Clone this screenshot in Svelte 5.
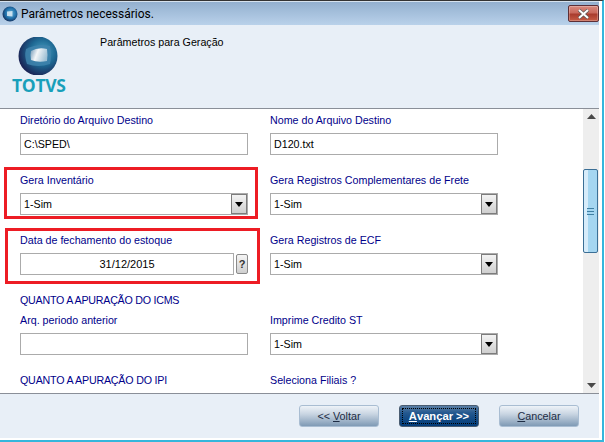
<script>
  const rows = [
    { left: { label: 'Diretório do Arquivo Destino', value: 'C:\\SPED\\', kind: 'input' }, right: { label: 'Nome do Arquivo Destino', value: 'D120.txt', kind: 'input' } },
    { left: { label: 'Gera Inventário', value: '1-Sim', kind: 'select' }, right: { label: 'Gera Registros Complementares de Frete', value: '1-Sim', kind: 'select' } },
    { left: { label: 'Data de fechamento do estoque', value: '31/12/2015', kind: 'date' }, right: { label: 'Gera Registros de ECF', value: '1-Sim', kind: 'select' } },
    { left: { label: 'Arq. periodo anterior', value: '', kind: 'input' }, right: { label: 'Imprime Credito ST', value: '1-Sim', kind: 'select' }, heading: 'QUANTO A APURAÇÃO DO ICMS' },
    { left: { label: 'QUANTO A APURAÇÃO DO IPI', value: '', kind: 'none', caps: true }, right: { label: 'Seleciona Filiais ?', value: '', kind: 'input' } }
  ];
</script>

{#snippet field(f)}
  <div class="field">
    <div class="label" class:caps={f.caps}>{f.label}</div>
    {#if f.kind === 'input'}
      <div class="box">{f.value}</div>
    {:else if f.kind === 'select'}
      <div class="box select">
        <span>{f.value}</span>
        <span class="arrow"><svg width="8" height="5" viewBox="0 0 8 5"><path d="M0 0h8L4 5z" fill="#000" /></svg></span>
      </div>
    {:else if f.kind === 'date'}
      <div class="date">
        <div class="box centered">{f.value}</div>
        <span class="help">?</span>
      </div>
    {/if}
  </div>
{/snippet}

<div class="window">
  <header class="titlebar">
    <svg class="appicon" width="16" height="16" viewBox="0 0 16 16">
      <defs>
        <radialGradient id="ai" cx="0.55" cy="0.45" r="0.6"><stop offset="0" stop-color="#5fb4dc" /><stop offset="0.6" stop-color="#1f6ea8" /><stop offset="1" stop-color="#14264f" /></radialGradient>
      </defs>
      <circle cx="8" cy="8" r="7.500" fill="url(#ai)" />
      <path d="M5 5.500 10.500 5v5.500L5 10z" fill="#e6f0f8" opacity=".8" />
    </svg>
    <span class="title">Parâmetros necessários.</span>
    <div class="close">
      <svg width="13" height="10" viewBox="0 0 13 10"><path d="M2 1l9 8M11 1l-9 8" stroke="#5a5a5a" stroke-width="3.400" /><path d="M2 1l9 8M11 1l-9 8" stroke="#fff" stroke-width="2" /></svg>
    </div>
  </header>

  <section class="banner">
    <div class="logo">
      <svg width="40" height="38" viewBox="0 0 40 38">
        <defs>
          <radialGradient id="globe" cx="0.62" cy="0.4" r="0.68">
            <stop offset="0" stop-color="#4aa3c4" />
            <stop offset="0.5" stop-color="#1d6792" />
            <stop offset="1" stop-color="#1a1a4c" />
          </radialGradient>
          <linearGradient id="screen" x1="0" y1="0.2" x2="1" y2="0.5">
            <stop offset="0" stop-color="#7fa2bd" />
            <stop offset="0.4" stop-color="#f4f6f8" />
            <stop offset="1" stop-color="#9dbfd4" />
          </linearGradient>
        </defs>
        <circle cx="20" cy="19" r="19.500" fill="url(#globe)" />
        <path d="M8 12 Q20 6 32 9 Q34 18 32 27 Q20 31 9 27 Q6 19 8 12z" fill="#3f84ad" opacity=".85" />
        <path d="M13 14 Q20 10 29 12 Q30 18 29 24 Q20 26 13 23 Q12 18 13 14z" fill="url(#screen)" />
      </svg>
      <div class="brand">TOTVS</div>
    </div>
    <div class="banner-text">Parâmetros para Geração</div>
  </section>

  <main class="body">
    <div class="form">
      {#each rows as row}
        {#if row.heading}<div class="heading">{row.heading}</div>{/if}
        <div class="row">
          {@render field(row.left)}
          {@render field(row.right)}
        </div>
      {/each}
    </div>
    <aside class="scrollbar">
      <svg class="sb-up" width="9" height="5" viewBox="0 0 9 5"><path d="M4.500 0 9 5H0z" fill="#4a4a4a" /></svg>
      <div class="thumb"><span class="grip"></span></div>
      <svg class="sb-down" width="9" height="5" viewBox="0 0 9 5"><path d="M0 0h9L4.500 5z" fill="#4a4a4a" /></svg>
    </aside>
    <div class="mark mark-a"></div>
    <div class="mark mark-b"></div>
  </main>

  <footer class="footer">
    <button class="btn">&lt;&lt; <u>V</u>oltar</button>
    <button class="btn primary"><span class="focus"><u>A</u>vançar &gt;&gt;</span></button>
    <button class="btn"><u>C</u>ancelar</button>
  </footer>
</div>

<style>
  :global(body) {
    margin: 0;
    background: #fff;
  }
  .window {
    width: 604px;
    height: 442px;
    box-sizing: border-box;
    display: flex;
    flex-direction: column;
    overflow: hidden;
    font-family: "Liberation Sans", Arial, sans-serif;
    font-size: 10.7px;
    color: #000;
    background: #fff;
    border-top: 1px solid #333;
    border-right: 2px solid #35b6dc;
    border-bottom: 2px solid #35b6dc;
  }
  .titlebar {
    height: 24px;
    flex: none;
    display: flex;
    align-items: center;
    gap: 3px;
    padding: 0 0 0 2px;
    margin-right: 3px;
    background: linear-gradient(#93b0cf, #b9d1ea);
    border-top: 1px solid #d6e2ee;
    box-sizing: border-box;
  }
  .appicon { flex: none; }
  .title {
    flex: 1;
    font-family: Roboto, sans-serif;
    font-size: 12px;
    color: #000;
  }
  .close {
    width: 31px;
    height: 17px;
    box-sizing: border-box;
    border: 1px solid #5d2f36;
    border-radius: 2px;
    background: linear-gradient(#d98a7e 0, #c9695c 45%, #a93c2e 55%, #c65c45 100%);
    display: flex;
    align-items: center;
    justify-content: center;
    box-shadow: inset 0 0 0 1px rgba(255, 255, 255, 0.25);
  }
  .banner {
    height: 84px;
    flex: none;
    margin-right: 3px;
    background: #e8eff7;
    display: flex;
    box-sizing: border-box;
    border-bottom: 1px solid #8a8f98;
  }
  .logo {
    width: 100px;
    padding: 12px 0 0 12px;
    box-sizing: border-box;
  }
  .logo svg { display: block; margin-left: 6px; }
  .brand {
    font-family: "Open Sans", sans-serif;
    font-weight: 700;
    font-size: 17.500px;
    line-height: 14px;
    margin-top: 3px;
    color: #189fba;
    letter-spacing: -0.3px;
  }
  .banner-text { padding-top: 11px; }
  .body {
    height: 285px;
    flex: none;
    margin-right: 3px;
    position: relative;
    display: flex;
    background: #fff;
    border-bottom: 1px solid #8a8f98;
    box-sizing: border-box;
    overflow: hidden;
  }
  .form {
    flex: 1;
    padding: 4px 0 0 20px;
  }
  .row {
    display: flex;
    gap: 22px;
    height: 60px;
  }
  .field { width: 228px; }
  .label {
    height: 14px;
    line-height: 14px;
    color: #00008a;
    margin-bottom: 6px;
  }
  .caps { letter-spacing: -0.2px; }
  .heading {
    height: 21px;
    line-height: 14px;
    color: #00008a;
    margin-top: 0;
    margin-bottom: -1px;
    letter-spacing: -0.25px;
  }
  .box {
    height: 22px;
    box-sizing: border-box;
    border: 1px solid #ababab;
    background: #fff;
    line-height: 21px;
    padding-left: 3px;
    display: flex;
    justify-content: space-between;
  }
  .select { padding-right: 0; line-height: 20px; }
  .arrow {
    width: 16px;
    height: 20px;
    box-sizing: border-box;
    border: 1px solid #7c7c7c;
    background: linear-gradient(#f3f3f3, #cfcfcf);
    display: flex;
    align-items: center;
    justify-content: center;
  }
  .date {
    display: flex;
    align-items: center;
    gap: 2px;
  }
  .date .box { width: 214px; }
  .centered { justify-content: center; padding-right: 3px; line-height: 20px; font-size: 11px; }
  .help {
    width: 12px;
    height: 20px;
    box-sizing: border-box;
    border: 1px solid #8a8a8a;
    border-radius: 2px;
    background: linear-gradient(#f5f5f5, #cfcfcf);
    font-weight: 700;
    font-size: 11px;
    line-height: 18px;
    text-align: center;
    color: #333;
  }
  .scrollbar {
    width: 16px;
    flex: none;
    background: #eeeeee;
    display: flex;
    flex-direction: column;
    align-items: center;
    position: relative;
  }
  .sb-up { margin-top: 5px; }
  .sb-down { position: absolute; bottom: 5px; }
  .thumb {
    position: absolute;
    top: 60px;
    left: 0;
    width: 15px;
    height: 84px;
    box-sizing: border-box;
    border: 1px solid #3b6f96;
    border-radius: 2px;
    background: linear-gradient(90deg, #d7ecfa 0 30%, #a5d6f1 30% 100%);
    display: flex;
    align-items: center;
    justify-content: center;
  }
  .grip {
    width: 7px;
    height: 7px;
    background: repeating-linear-gradient(#3f7fa3 0 1px, #a5d6f1 1px 3px);
  }
  .mark {
    position: absolute;
    box-sizing: border-box;
    border: 3px solid #ed1c24;
    pointer-events: none;
  }
  .mark-a { left: 4px; top: 58px; width: 254px; height: 52px; }
  .mark-b { left: 5px; top: 119px; width: 255px; height: 56px; }
  .footer {
    flex: 1;
    margin-right: 3px;
    margin-bottom: 2px;
    background: #e8eff7;
    display: flex;
    gap: 20px;
    padding: 11px 0 0 299px;
    box-sizing: border-box;
  }
  .btn {
    width: 80px;
    height: 22px;
    padding: 0;
    box-sizing: border-box;
    border: 1px solid #a9bdd2;
    border-radius: 3px;
    font: inherit;
    font-size: 10.800px;
    color: #1d2c44;
    background: linear-gradient(#eef3f8 0, #c9d5e2 40%, #7f9ab5 100%);
  }
  .primary {
    border-color: #4a5d72;
    color: #fff;
    font-weight: 700;
    font-size: 11.200px;
    background: linear-gradient(#5a7ea4 0, #23588f 35%, #003a78 100%);
    padding: 2px;
  }
  .focus {
    display: flex;
    height: 100%;
    align-items: center;
    justify-content: center;
    box-sizing: border-box;
    border: 1px dotted #000;
  }
</style>
